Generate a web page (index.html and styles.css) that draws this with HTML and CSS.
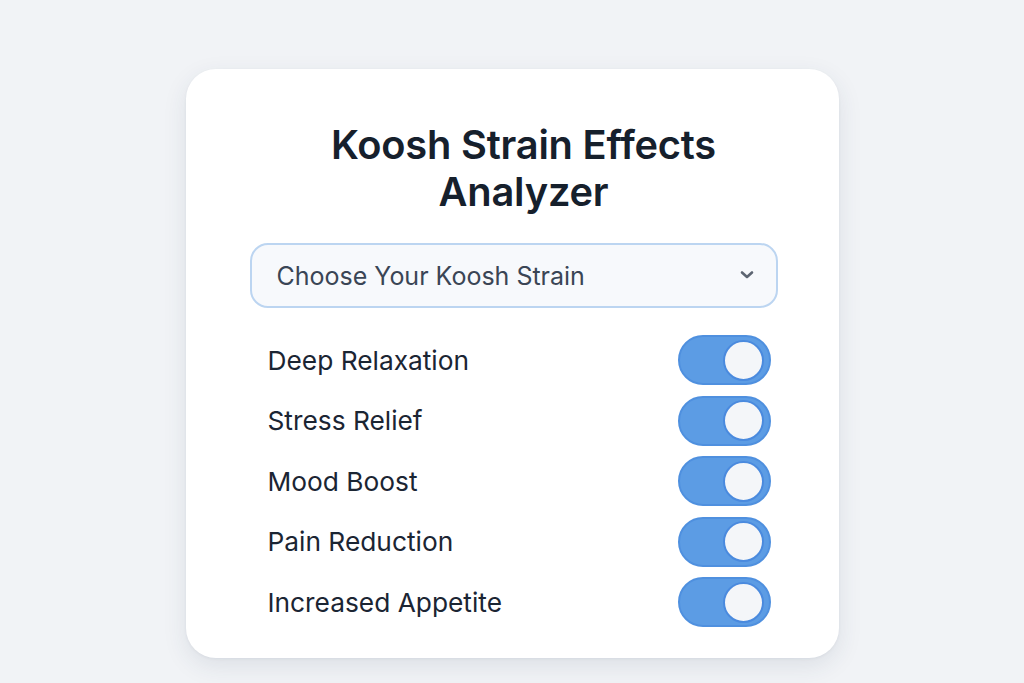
FILE: index.html
```html
<!DOCTYPE html>
<html lang="en">
<head>
<meta charset="utf-8">
<title>Koosh Strain Effects Analyzer</title>
<link rel="stylesheet" href="styles.css">
</head>
<body>
<main class="card">
  <h1 class="title">Koosh Strain Effects<br>Analyzer</h1>
  <div class="select">
    <span class="select-text">Choose Your Koosh Strain</span>
    <svg class="chevron" width="14" height="10" viewBox="0 0 14 10"><path d="M2 2.5 L7 7 L12 2.5" fill="none" stroke="#5d6572" stroke-width="2.6" stroke-linecap="round" stroke-linejoin="round"/></svg>
  </div>
  <ul class="effects">
    <li class="effect"><span class="label">Deep Relaxation</span><span class="toggle"><span class="knob"></span></span></li>
    <li class="effect"><span class="label">Stress Relief</span><span class="toggle"><span class="knob"></span></span></li>
    <li class="effect"><span class="label">Mood Boost</span><span class="toggle"><span class="knob"></span></span></li>
    <li class="effect"><span class="label">Pain Reduction</span><span class="toggle"><span class="knob"></span></span></li>
    <li class="effect"><span class="label">Increased Appetite</span><span class="toggle"><span class="knob"></span></span></li>
  </ul>
</main>
</body>
</html>
```

FILE: styles.css
```css
* { box-sizing: border-box; }
html, body { margin: 0; padding: 0; }
body {
  background: #f1f3f6;
  font-family: Inter, "Noto Sans", sans-serif;
  height: 683px;
  overflow: hidden;
  padding-top: 69px;
}
.card {
  width: 653px;
  height: 589px;
  margin: 0 auto;
  background: #ffffff;
  border-radius: 30px;
  box-shadow: 0 8px 24px rgba(40, 55, 85, 0.10), 0 1px 3px rgba(40, 55, 85, 0.06);
  padding: 52px 61px 31px 64px;
  display: flex;
  flex-direction: column;
}
.title {
  margin: 0;
  font-size: 39.8px;
  line-height: 47px;
  font-weight: 600;
  color: #16202c;
  text-align: center;
  padding-left: 20px;
  letter-spacing: -0.2px;
}
.select {
  margin-top: 28px;
  height: 66px;
  border: 2px solid #bcd5f1;
  background: #f7f9fc;
  border-radius: 18px;
  display: flex;
  align-items: center;
  justify-content: space-between;
  padding: 0 22px 0 25px;
}
.select-text {
  font-size: 25px;
  color: #3a4555;
}
.chevron { display: block; margin-top: -2px; }
.effects {
  list-style: none;
  margin: 27px 0 0;
  padding: 0 7px 0 18px;
  display: flex;
  flex-direction: column;
  gap: 10.5px;
}
.effect {
  height: 50px;
  display: flex;
  align-items: center;
  justify-content: space-between;
}
.label {
  font-size: 26.3px;
  color: #1b2533;
}
.toggle {
  width: 93px;
  height: 50px;
  border-radius: 25px;
  background: #5c9ce4;
  border: 2px solid #4f90df;
  display: flex;
  align-items: center;
  justify-content: flex-end;
  padding-right: 5px;
}
.knob {
  width: 41px;
  height: 41px;
  border-radius: 50%;
  background: #f4f6f9;
  border: 2px solid #4a8ade;
}
```
